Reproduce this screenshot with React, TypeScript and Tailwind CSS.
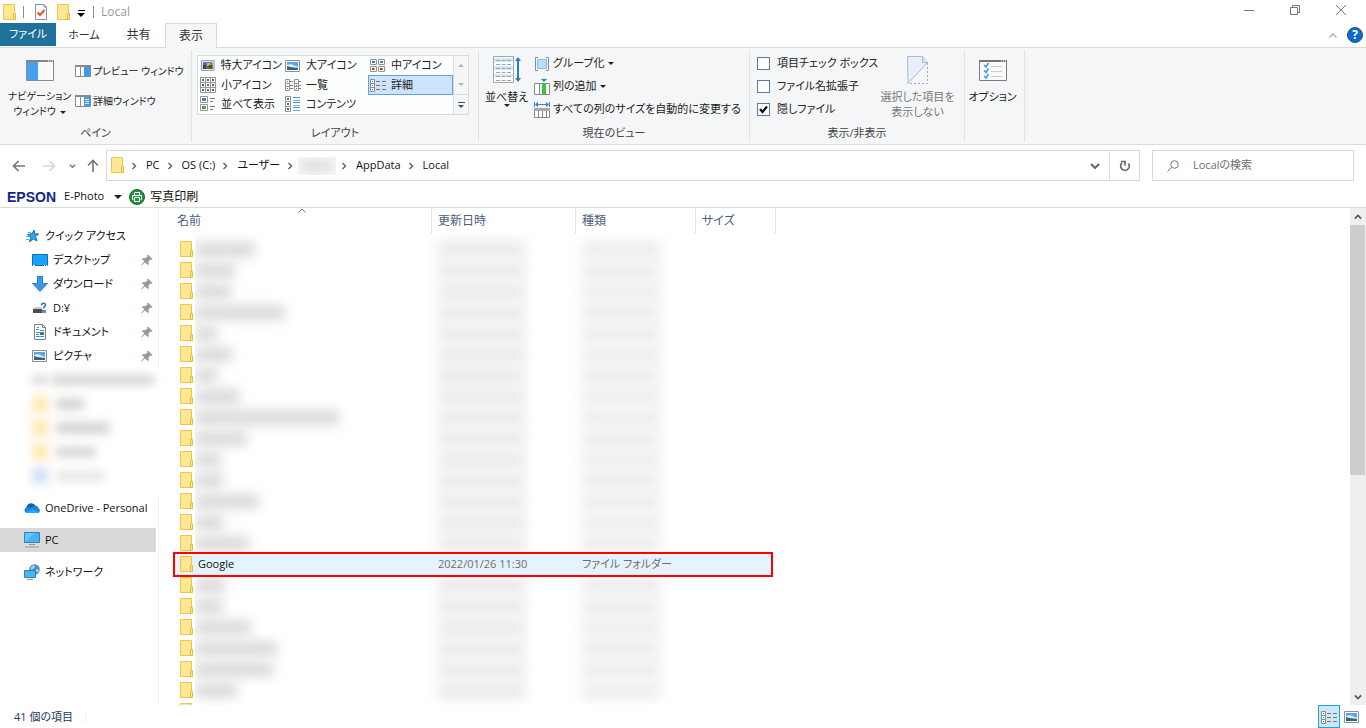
import React from "react";
import clsx from "clsx";

interface IconProps {
  className?: string;
}

interface FileRow {
  name?: string;
  date?: string;
  type?: string;
  hidden?: number;
}

// Rows without a name are redacted, "hidden" is the width of the smudge
const rows: FileRow[] = [
  ...[60, 40, 36, 90, 22, 37, 22, 44, 144, 52, 26, 28, 64, 28, 54].map((hidden) => ({ hidden })),
  { name: "Google", date: "2022/01/26 11:30", type: "ファイル フォルダー" },
  ...[30, 28, 56, 82, 78, 42].map((hidden) => ({ hidden })),
  {},
];

const FolderIcon = () => (
  <svg viewBox="0 0 13 16" className="h-4 w-[13px] shrink-0">
    <path d="M.5.5h11v15H.5z" fill="#ffe794" stroke="#ecc64b" />
    <path d="M10.500 9.500h2v6h-2z" fill="#ffe794" stroke="#e3bb43" />
  </svg>
);

const CheckedDocIcon = () => (
  <svg viewBox="0 0 12 16" className="h-4 w-3">
    <path d="M.5.5H9L11.500 3v12.500H.5z" fill="#fafafa" stroke="#8a8f99" />
    <path d="M9 .5V3h2.500" fill="none" stroke="#8a8f99" />
    <path d="M2.500 8.500 5 11l4.500-5" fill="none" stroke="#e2562a" strokeWidth="2" />
  </svg>
);

const DownTriangle = ({ className }: IconProps) => (
  <svg viewBox="0 0 6 3" className={clsx("inline-block h-[3px] w-[6px] shrink-0", className)}>
    <path d="M0 0h6L3 3z" fill="currentColor" />
  </svg>
);

const Chevron = ({ className }: IconProps) => (
  <svg viewBox="0 0 8 8" className={clsx("size-2 shrink-0 text-[#666]", className)}>
    <path d="M2.500 1 5.500 4l-3 3" fill="none" stroke="currentColor" strokeWidth="1.500" />
  </svg>
);

const ChevronDown = ({ className }: IconProps) => (
  <svg viewBox="0 0 10 6" className={clsx("shrink-0", className)}>
    <path d="M1 1l4 4 4-4" fill="none" stroke="currentColor" strokeWidth="2" />
  </svg>
);

const NavPaneIcon = () => (
  <svg viewBox="0 0 28 21" className="h-[21px] w-7">
    <path d="M.5.5h27v20H.5z" fill="#f8f9fa" stroke="#8a8a8a" />
    <path d="M0 0h28v2H0z" fill="#858585" />
    <path d="M1 2h11v18H1z" fill="#45a2e8" />
    <path d="M22 1h1M24 1h1M26 1h1" stroke="#fff" />
  </svg>
);

const PreviewPaneIcon = () => (
  <svg viewBox="0 0 16 12" className="h-3 w-4 shrink-0">
    <path d="M.5.5h15v11H.5z" fill="#fff" stroke="#8a8a8a" />
    <path d="M0 0h16v2H0zM5 2h1v9H5z" fill="#8a8a8a" />
    <path d="M9 2h6v9H9z" fill="#3f9be3" />
  </svg>
);

const DetailsPaneIcon = () => (
  <svg viewBox="0 0 16 12" className="h-3 w-4 shrink-0">
    <path d="M.5.5h15v11H.5z" fill="#fff" stroke="#8a8a8a" />
    <path d="M0 0h16v2H0zM5 2h1v9H5z" fill="#8a8a8a" />
    <path d="M9 2h6v9H9z" fill="#3f9be3" />
    <path d="M10 4.500h4M10 6.500h4M10 8.500h4" stroke="#d6ebfb" />
  </svg>
);

const ExtraLargeIcon = () => (
  <svg viewBox="0 0 16 16" className="size-4">
    <path d="M1.500 2.500h13v10h-13z" fill="#fff" stroke="#8a8a8a" />
    <path d="M3 4h10v7H3z" fill="#3471d1" />
    <path d="M3 7h4v4H3z" fill="#29417a" />
    <path d="M7 5h4v3H7z" fill="#e8b424" />
    <path d="M9 7h4v4H9z" fill="#3b5a27" />
    <path d="M6 8h3v2H6z" fill="#d63c28" />
  </svg>
);

const PictureIcon = () => (
  <svg viewBox="0 0 16 16" className="size-4 shrink-0">
    <path d="M.5 2.500h14v11H.5z" fill="#fff" stroke="#8a8f94" />
    <path d="M2 4h11v5H2z" fill="#5ba7ee" />
    <path d="M2 7l4-1 7 3v1H2z" fill="#dceefa" />
    <path d="M2 8l3 1 8 1v2H2z" fill="#34617c" />
  </svg>
);

const MediumIcon = () => (
  <svg viewBox="0 0 16 16" className="size-4">
    <path d="M.5 1.500h6v5h-6zM8.500 1.500h6v5h-6zM.5 8.500h6v5h-6zM8.500 8.500h6v5h-6z" fill="#fff" stroke="#949494" />
    <path d="M2 3h3v2H2zM10 3h3v2h-3z" fill="#3f83b8" />
    <path d="M2 10h3v2H2z" fill="#c93625" />
    <path d="M10 10h3v2h-3z" fill="#2c58a0" />
    <path d="M4 10h1v2H4zM12 10h1v2h-1z" fill="#e3a51b" />
  </svg>
);

const SmallIcon = () => (
  <svg viewBox="0 0 16 16" className="size-4">
    <path d="M.5.5h15v15H.5zM5.500 0v16M10.500 0v16M0 5.500h16M0 10.500h16" fill="#fff" stroke="#949494" />
    <path d="M2 2h2v2H2zM7 7h2v2H7zM7 12h2v2H7z" fill="#3b79a8" />
    <path d="M7 2h2v2H7zM12 7h2v2h-2zM2 12h2v2H2z" fill="#34794a" />
    <path d="M12 2h2v2h-2zM2 7h2v2H2zM12 12h2v2h-2z" fill="#a93a33" />
  </svg>
);

const ListIcon = () => (
  <svg viewBox="0 0 16 16" className="size-4">
    <path d="M.5 2.500h4v11h-4zM9.500 2.500h4v11h-4zM0 6.500h5M0 9.500h5M9 6.500h5M9 9.500h5" fill="#fff" stroke="#949494" />
    <path d="M5 4.500h3M5 8.500h3M5 11.500h3M14 4.500h2M14 8.500h2M14 11.500h2" stroke="#7d7d7d" />
    <path d="M2 4h1v1H2zM11 8h1v1h-1z" fill="#2f80c9" />
    <path d="M2 11h1v1H2zM11 11h1v1h-1z" fill="#c0392b" />
  </svg>
);

const DetailsIcon = () => (
  <svg viewBox="0 0 16 16" className="size-4">
    <path d="M.5 2.500h4v12h-4zM0 6.500h5M0 10.500h5" fill="#fff" stroke="#8c8c8c" />
    <path d="M6 4.500h4M12 4.500h4M6 8.500h4M12 8.500h4M6 12.500h4M12 12.500h4" stroke="#777" />
    <path d="M2 4h1v1H2z" fill="#2f8f7c" />
    <path d="M2 8h1v1H2z" fill="#2f80e9" />
    <path d="M2 12h1v1H2z" fill="#c8281b" />
  </svg>
);

const TilesIcon = () => (
  <svg viewBox="0 0 16 16" className="size-4">
    <path d="M.5.500h7v6h-7zM.5 8.500h7v6h-7z" fill="#fff" stroke="#949494" />
    <path d="M2 2h4v3H2z" fill="#3c82bd" />
    <path d="M2 10h4v3H2z" fill="#4d8a4c" />
    <path d="M4 11h2v1H4z" fill="#e0a526" />
    <path d="M10 2.500h5M10 5.500h3M10 10.500h5M10 13.500h3" stroke="#777" />
  </svg>
);

const ContentIcon = () => (
  <svg viewBox="0 0 16 16" className="size-4">
    <path d="M.5.500h5v15h-5zM0 5.500h6M0 10.500h6" fill="#fff" stroke="#949494" />
    <path d="M2 2h2v2H2z" fill="#2f80c9" />
    <path d="M2 7h2v2H2z" fill="#58744b" />
    <path d="M2 12h2v2H2z" fill="#c0392b" />
    <path d="M8 1.500h7M8 6.500h7M8 11.500h7" stroke="#4a90e2" />
    <path d="M8 4.500h7M8 9.500h7M8 14.500h7" stroke="#6fa8e8" />
  </svg>
);

const SortIcon = () => (
  <svg viewBox="0 0 28 28" className="size-7">
    <path d="M.5.5h20v26H.5z" fill="#fff" stroke="#a5a5a5" />
    <path d="M1 2h19v4H1zM1 10h19v4H1zM1 18h19v3H1z" fill="#d0e9f8" />
    <path
      d="M3 4.500h15M3 8.500h15M3 12.500h15M3 16.500h15M3 20.500h15M3 24.500h15"
      stroke="#a0a4a8"
      strokeDasharray="4 1.500"
    />
    <path d="M25 3v21" stroke="#2b7dc4" strokeWidth="2" />
    <path d="M22 5l3-4 3 4zM22 22l3 4 3-4z" fill="#2b7dc4" />
  </svg>
);

const GroupByIcon = () => (
  <svg viewBox="0 0 16 16" className="size-4 shrink-0">
    <path d="M4 1.500H1.500v13H4M12 1.500h2.500v13H12" fill="none" stroke="#8d8d8d" />
    <path d="M3.500 3.500h9v9h-9z" fill="#b9e0fa" stroke="#86c0ea" />
  </svg>
);

const AddColumnIcon = () => (
  <svg viewBox="0 0 16 16" className="size-4 shrink-0">
    <path d="M.5 4.500h15v11H.5zM5.500 4v12M11.500 4v12" fill="#fff" stroke="#888" />
    <path d="M8 5h4v10H8z" fill="#32cb38" />
    <path d="M7 0h6l-3 3z" fill="#2b7dc4" />
  </svg>
);

const FitColumnsIcon = () => (
  <svg viewBox="0 0 16 16" className="size-4 shrink-0">
    <path d="M.5 0v5M15.500 0v5M2 2.500h12" stroke="#3588cd" />
    <path d="M4 0v5L1 2.500zM12 0v5l3-2.500z" fill="#2b7dc4" />
    <path d="M.5 6.500h15v9H.5zM4.500 9v6M8.500 9v6M12.500 9v6" fill="#fff" stroke="#888" />
    <path d="M0 6h16v3H0z" fill="#a8a8a8" />
  </svg>
);

const HideItemsIcon = () => (
  <svg viewBox="0 0 22 28" className="h-7 w-[22px]">
    <path d="M.5.5h15l5 6L1 27.500z" fill="#e8effa" stroke="#aab9d0" />
    <path d="M15.500.5v6h5" fill="#d7e5f8" stroke="#aab9d0" />
    <path d="M20.500 7v20.500H1" fill="none" stroke="#95a8c8" strokeDasharray="2 2" />
  </svg>
);

const OptionsIcon = () => (
  <svg viewBox="0 0 28 21" className="h-[21px] w-7">
    <path d="M.5.5h27v20H.5z" fill="#fafafa" stroke="#7b7b7b" />
    <path d="M0 0h28v2H0z" fill="#747474" />
    <path d="M22 1h1M24 1h1M26 1h1" stroke="#fff" />
    <path
      d="M5 5l2 2 2.500-4M5 10.500l2 2 2.500-4M5 16l2 2 2.500-4"
      fill="none"
      stroke="#3d9be6"
      strokeWidth="1.500"
    />
    <path d="M12 6.500h11M12 11.500h11M12 16.500h11" stroke="#c9c9c9" />
  </svg>
);

const BackArrow = ({ className }: IconProps) => (
  <svg viewBox="0 0 14 12" className={clsx("h-3 w-[14px] shrink-0", className)}>
    <path d="M6.500 1l-5 5 5 5M1.500 6H13" fill="none" stroke="currentColor" strokeWidth="1.700" />
  </svg>
);

const PrinterIcon = () => (
  <svg viewBox="0 0 16 16" className="size-4 shrink-0">
    <circle cx="8" cy="8" r="7.500" fill="#24933d" stroke="#2c5c35" />
    <path d="M5.500 6V3.500h5V6M4.500 10.500h-1v-4h9v4h-1M5.500 8.500h5v4h-5z" fill="none" stroke="#fff" />
  </svg>
);

const StarIcon = () => (
  <svg viewBox="0 0 16 16" className="size-4">
    <path
      d="M10 2l.8 3.800 4 .2-3.300 2.500 1.500 4.500-3.700-2-4 3 1.500-4.500L3.500 6.500l4.500-.8z"
      fill="#2ea3ef"
      stroke="#1777bd"
    />
    <path d="M4 4.500h3M2 8.500h3M2 11.500h3" stroke="#58b5f3" />
  </svg>
);

const DesktopIcon = () => (
  <svg viewBox="0 0 16 16" className="size-4">
    <path d="M.5 2.500h15v11H.5z" fill="#1aa3fc" stroke="#0c72b8" />
    <path d="M1 13.500h2M12 13.500h1M14 13.500h1" stroke="#fff" />
  </svg>
);

const DownloadIcon = () => (
  <svg viewBox="0 0 16 16" className="size-4">
    <path d="M5.500.500h5v7h5L8 15.500.500 7.500h5z" fill="#3c98e4" stroke="#2b80c9" />
  </svg>
);

const DriveIcon = () => (
  <svg viewBox="0 0 16 16" className="size-4">
    <path d="M1 9l2-2h6l1 2z" fill="#c6c9cb" />
    <path d="M1 9h9v4H1z" fill="#4a4e51" />
    <path d="M10 10h4v3h-4z" fill="#8b9094" />
    <path d="M9.500 5.500c0-3 4-3 4-.5 0 1.500-2 1.500-2 3.500" fill="none" stroke="#2381c8" strokeWidth="1.600" />
    <path d="M10.500 10h2v1.500h-2z" fill="#2381c8" />
  </svg>
);

const DocumentIcon = () => (
  <svg viewBox="0 0 16 16" className="size-4">
    <path d="M2.500.500h8l3 3v12h-11z" fill="#fff" stroke="#848484" />
    <path d="M10.500.500v3h3" fill="none" stroke="#848484" />
    <path d="M5 3.500h2M4 5.500h3M8 6.500h4M4 8.500h8M4 10.500h3M4 12.500h8" stroke="#3f8fcd" />
    <path d="M8 9h4v2H8z" fill="#326b99" />
  </svg>
);

const PinIcon = () => (
  <svg viewBox="0 0 12 12" className="size-3">
    <path
      d="M7 .5 11.500 5l-1 .8-1-.2-2 2 .2 2.400-1 1L4 8.300.8 11.500.3 11l3-3.500L1 5l1-1 2.500.3 2-2-.3-1z"
      fill="#8e9aa5"
    />
  </svg>
);

const OneDriveIcon = () => (
  <svg viewBox="0 0 16 16" className="size-4">
    <path d="M2.500 7C3.500 3 9 1.500 12 6.500L8 11 1 10z" fill="#0a62b5" />
    <path d="M7 8c2-3 7-3 7.300 0C16.500 9 16.500 13 13.500 13H3.500C-.5 13-.5 7.500 3.500 7.200c1.500-.2 2.500.2 3.500.8z" fill="#1b84d8" />
    <path d="M1.500 12.300l7-3 6.500 2.700-1.500 1h-10z" fill="#2ba6ef" />
  </svg>
);

const PcIcon = () => (
  <svg viewBox="0 0 16 16" className="size-4">
    <path d="M.5.5h15v10H.5z" fill="#42b4fb" stroke="#3a80ad" />
    <path d="M1 10L11 1H1z" fill="#69c5fc" />
    <path d="M5 12.500h6M1 15h14" stroke="#8c9aa5" />
  </svg>
);

const NetworkIcon = () => (
  <svg viewBox="0 0 16 16" className="size-4">
    <circle cx="10.500" cy="5.500" r="5.300" fill="#4d91be" />
    <path d="M7 3l3-2 1 2-2 2-2 1zM12 5l3 .500-1 3-2-1z" fill="#a5d3ea" />
    <path d="M.5 6.500h11v7H.5z" fill="#45b6fb" stroke="#357fae" />
    <path d="M3 15.500h6" stroke="#8c9aa5" />
  </svg>
);

const RibbonGroup = ({
  label,
  className,
  children,
}: {
  label: string;
  className: string;
  children: React.ReactNode;
}) => (
  <section className={clsx("flex h-[92px] shrink-0 flex-col border-r border-[#e2e3e4]", className)}>
    <div className="flex h-[73px]">{children}</div>
    <h2 className="text-center text-[11px] leading-[19px] text-[#444]">{label}</h2>
  </section>
);

const layouts = [
  { label: "特大アイコン", icon: <ExtraLargeIcon /> },
  { label: "大アイコン", icon: <PictureIcon /> },
  { label: "中アイコン", icon: <MediumIcon /> },
  { label: "小アイコン", icon: <SmallIcon /> },
  { label: "一覧", icon: <ListIcon /> },
  { label: "詳細", icon: <DetailsIcon /> },
  { label: "並べて表示", icon: <TilesIcon /> },
  { label: "コンテンツ", icon: <ContentIcon /> },
];

const checks = [
  { id: "item-check", label: "項目チェック ボックス", on: false },
  { id: "extensions", label: "ファイル名拡張子", on: false },
  { id: "hidden-files", label: "隠しファイル", on: true },
];

const Ribbon = () => (
  <div className="flex h-[97px] shrink-0 border-b border-[#dadbdc] bg-[#f5f6f7] pt-0.5 text-[#222]">
    <RibbonGroup label="ペイン" className="w-48 text-[10px]">
      <button className="ml-1 flex w-[71px] flex-col items-center gap-2 pt-[10px] leading-[15px]">
        <NavPaneIcon />
        <span className="whitespace-nowrap">
          ナビゲーション
          <br />
          ウィンドウ
          <DownTriangle className="ml-1 align-middle" />
        </span>
      </button>
      <div className="flex flex-col pt-[6px] whitespace-nowrap">
        <button className="flex h-[30px] items-center gap-0.5">
          <PreviewPaneIcon />
          プレビュー ウィンドウ
        </button>
        <button className="flex h-[30px] items-center gap-0.5">
          <DetailsPaneIcon />
          詳細ウィンドウ
        </button>
      </div>
    </RibbonGroup>

    <RibbonGroup label="レイアウト" className="w-[287px]">
      <div className="mt-[5px] ml-[5px] flex h-[60px] border border-[#d9dadb] bg-[#fcfdfd]">
        <div className="grid w-[255px] grid-cols-3 grid-rows-3">
          {layouts.map(({ label, icon }) => (
            <button
              key={label}
              className={clsx(
                "flex items-center gap-[5px] border pl-px whitespace-nowrap",
                label === "詳細" ? "border-[#62a2e4] bg-[#cde4fc]" : "border-transparent"
              )}
            >
              {icon}
              {label}
            </button>
          ))}
        </div>
        <div className="flex w-[15px] flex-col border-l border-[#d9dadb] bg-[#f5f6f7]">
          <button aria-label="上へ" className="flex flex-1 items-center justify-center text-[#b5b5b5]">
            <DownTriangle className="rotate-180" />
          </button>
          <button aria-label="下へ" className="flex flex-1 items-center justify-center text-[#b5b5b5]">
            <DownTriangle />
          </button>
          <button
            aria-label="その他"
            className="flex flex-1 flex-col items-center justify-center gap-0.5 border-t border-[#d9dadb] text-[#3f4f66]"
          >
            <span className="h-px w-[7px] bg-[#3f4f66]" />
            <DownTriangle />
          </button>
        </div>
      </div>
    </RibbonGroup>

    <RibbonGroup label="現在のビュー" className="w-[271px]">
      <button className="flex w-[55px] flex-col items-center pt-[6px] leading-[15px]">
        <SortIcon />
        <span className="mt-[5px] whitespace-nowrap">並べ替え</span>
        <DownTriangle />
      </button>
      <div className="flex flex-col pt-0.5 whitespace-nowrap">
        <button className="flex h-[23px] items-center gap-[3px]">
          <GroupByIcon />
          グループ化
          <DownTriangle />
        </button>
        <button className="flex h-[23px] items-center gap-[3px]">
          <AddColumnIcon />
          列の追加
          <DownTriangle />
        </button>
        <button className="flex h-[23px] items-center gap-[3px]">
          <FitColumnsIcon />
          すべての列のサイズを自動的に変更する
        </button>
      </div>
    </RibbonGroup>

    <RibbonGroup label="表示/非表示" className="w-[215px]">
      <div className="flex w-[125px] flex-col pt-0.5 pl-[7px] whitespace-nowrap">
        {checks.map(({ id, label, on }) => (
          <div key={id} className="flex h-[23px] items-center gap-[7px]">
            <span className="relative flex">
              <input
                id={id}
                type="checkbox"
                defaultChecked={on}
                className="peer size-[13px] appearance-none border border-[#5b7ba6] bg-white"
              />
              <svg
                viewBox="0 0 13 13"
                className="pointer-events-none absolute inset-0 size-[13px] opacity-0 peer-checked:opacity-100"
              >
                <path d="M3 6l2.500 3L10 3.500" fill="none" stroke="#111" strokeWidth="2.200" />
              </svg>
            </span>
            <label htmlFor={id}>{label}</label>
          </div>
        ))}
      </div>
      <button
        disabled
        className="flex flex-1 flex-col items-center gap-[5px] pt-[6px] pr-1 leading-[15px] whitespace-nowrap text-[#777]"
      >
        <HideItemsIcon />
        <span>
          選択した項目を
          <br />
          表示しない
        </span>
      </button>
    </RibbonGroup>

    <section className="flex h-[92px] w-[60px] shrink-0 justify-center border-r border-[#e2e3e4] pr-1">
      <button className="flex flex-col items-center gap-2 pt-[10px] leading-[15px] whitespace-nowrap">
        <OptionsIcon />
        オプション
      </button>
    </section>
  </div>
);

const TitleBar = () => (
  <header className="flex h-[23px] shrink-0 items-center pl-[3px]">
    <FolderIcon />
    <span className="ml-[7px] h-3 w-px bg-[#8d8d8d]" />
    <button aria-label="プロパティ" className="ml-[11px]">
      <CheckedDocIcon />
    </button>
    <button aria-label="新しいフォルダー" className="ml-[10px]">
      <FolderIcon />
    </button>
    <button aria-label="カスタマイズ" className="mt-1 ml-[7px] flex flex-col items-center gap-0.5 text-black">
      <span className="h-px w-[7px] bg-black" />
      <svg viewBox="0 0 8 4" className="h-1 w-2">
        <path d="M0 0h8L4 4z" fill="currentColor" />
      </svg>
    </button>
    <span className="ml-2 h-3 w-px bg-[#8d8d8d]" />
    <h1 className="ml-[7px] text-xs text-[#999]">Local</h1>
    <div className="mr-5 ml-auto flex h-5 items-center gap-9 self-start text-[#777]">
      <button aria-label="最小化">
        <svg viewBox="0 0 10 10" className="size-[10px]">
          <path d="M0 5.500h10" stroke="currentColor" />
        </svg>
      </button>
      <button aria-label="元に戻す">
        <svg viewBox="0 0 10 10" className="size-[10px]">
          <path d="M.5 2.500h7v7h-7zM2.500 2.500v-2h7v7h-2" fill="none" stroke="currentColor" />
        </svg>
      </button>
      <button aria-label="閉じる">
        <svg viewBox="0 0 10 10" className="size-[10px]">
          <path d="M0 0l10 10M10 0L0 10" stroke="currentColor" />
        </svg>
      </button>
    </div>
  </header>
);

const Tabs = () => (
  <nav className="flex h-[25px] shrink-0 border-b border-[#dadbdc] text-xs text-[#333]">
    <button className="mb-px w-14 bg-[#1f7199] text-[11px] text-white">ファイル</button>
    <button className="w-14 text-[11px]">ホーム</button>
    <button className="w-[53px]">共有</button>
    <button className="-mb-px w-[52px] border border-b-0 border-[#dadbdc] bg-[#f5f6f7]">表示</button>
    <div className="mr-[3px] ml-auto flex items-center gap-[10px]">
      <button aria-label="リボンの最小化" className="text-[#aaa]">
        <svg viewBox="0 0 8 5" className="h-[5px] w-2">
          <path d="M.5 4.500L4 1l3.500 3.500" fill="none" stroke="currentColor" strokeWidth="1.300" />
        </svg>
      </button>
      <button
        aria-label="ヘルプ"
        className="size-4 rounded-full border border-[#24527f] bg-[#0a6cce] text-center text-xs leading-[14px] font-bold text-white"
      >
        ?
      </button>
    </div>
  </nav>
);

const Crumb = ({ children }: { children: React.ReactNode }) => (
  <>
    <Chevron className="mr-[6px] ml-1" />
    <a href="#" className="px-0.5 whitespace-nowrap">
      {children}
    </a>
  </>
);

const AddressBar = () => (
  <div className="flex shrink-0 items-stretch px-3 py-[5px]">
    <div className="flex w-[94px] items-center text-[#777]">
      <button aria-label="戻る">
        <BackArrow />
      </button>
      <button aria-label="進む" className="ml-4 text-[#d5d5d5]">
        <BackArrow className="rotate-180" />
      </button>
      <button aria-label="履歴" className="ml-[13px]">
        <ChevronDown className="h-1 w-[7px]" />
      </button>
      <button aria-label="上へ" className="ml-[10px]">
        <BackArrow className="rotate-90" />
      </button>
    </div>
    <div className="flex h-[31px] flex-1 items-center border border-[#d9d9d9] pl-1">
      <span className="mr-0.5 pb-0.5">
        <FolderIcon />
      </span>
      <Crumb>PC</Crumb>
      <Crumb>OS (C:)</Crumb>
      <Crumb>ユーザー</Crumb>
      <Chevron className="mx-1" />
      <span className="h-[18px] w-[38px] overflow-hidden bg-[#f6f6f6]">
        <span className="m-1 block h-[10px] bg-[#dedede] blur-xs" />
      </span>
      <Crumb>AppData</Crumb>
      <Crumb>Local</Crumb>
      <button aria-label="以前の場所" className="mr-[9px] ml-auto text-[#666]">
        <ChevronDown className="h-[6px] w-[10px]" />
      </button>
      <button
        aria-label="最新の情報に更新"
        className="flex h-full w-[30px] items-center justify-center border-l border-[#d9d9d9] text-[#666]"
      >
        <svg viewBox="0 0 12 12" className="size-3">
          <path
            d="M9.500 3.500A4.300 4.300 0 113 2.800M2 1.500h4v4"
            fill="none"
            stroke="currentColor"
            strokeWidth="1.700"
          />
        </svg>
      </button>
    </div>
    <label className="ml-3 flex h-[31px] w-[202px] items-center gap-[14px] border border-[#d9d9d9] pl-[14px]">
      <svg viewBox="0 0 12 12" className="size-3 shrink-0">
        <circle cx="7.500" cy="4.500" r="3.800" fill="none" stroke="#777" />
        <path d="M4.700 7.300L.5 11.500" stroke="#777" />
      </svg>
      <input
        type="text"
        aria-label="検索"
        placeholder="Localの検索"
        className="w-full min-w-0 bg-transparent outline-none placeholder:text-[#6d6d6d]"
      />
    </label>
  </div>
);

const SideItem = ({
  icon,
  label,
  nested,
  selected,
}: {
  icon: React.ReactNode;
  label: string;
  nested?: boolean;
  selected?: boolean;
}) => (
  <li>
    <a
      href="#"
      className={clsx(
        "mr-0.5 flex h-6 items-center gap-[5px] pr-[3px] whitespace-nowrap",
        nested ? "pl-8" : "pl-6",
        selected && "bg-[#d9d9d9]"
      )}
    >
      {icon}
      {label}
      {nested && (
        <span className="ml-auto">
          <PinIcon />
        </span>
      )}
    </a>
  </li>
);

const Sidebar = () => (
  <aside className="w-[159px] shrink-0 border-r border-[#f1f1f1] pt-4">
    <ul>
      <SideItem icon={<StarIcon />} label="クイック アクセス" />
      <SideItem nested icon={<DesktopIcon />} label="デスクトップ" />
      <SideItem nested icon={<DownloadIcon />} label="ダウンロード" />
      <SideItem nested icon={<DriveIcon />} label="D:¥" />
      <SideItem nested icon={<DocumentIcon />} label="ドキュメント" />
      <SideItem nested icon={<PictureIcon />} label="ピクチャ" />
    </ul>
    {/* Redacted shortcuts */}
    <div className="-mr-px bg-white pb-2 pl-8">
      <div className="flex h-6 items-center gap-1">
        <span className="h-2 w-4 bg-neutral-300 blur-[5px]" />
        <span className="h-[10px] w-[102px] bg-neutral-300 blur-[5px]" />
      </div>
      <div className="flex h-6 items-center gap-2">
        <span className="size-4 bg-[#ffe9ab] blur-[5px]" />
        <span className="h-3 w-7 bg-neutral-300 blur-[5px]" />
      </div>
      <div className="flex h-6 items-center gap-2">
        <span className="size-4 bg-[#ffe9ab] blur-[5px]" />
        <span className="h-3 w-[54px] bg-neutral-300 blur-[5px]" />
      </div>
      <div className="flex h-6 items-center gap-2">
        <span className="size-4 bg-[#ffe9ab] blur-[5px]" />
        <span className="h-[10px] w-10 bg-neutral-300 blur-[5px]" />
      </div>
      <div className="flex h-6 items-center gap-2">
        <span className="size-4 bg-[#cfe1f8] blur-[5px]" />
        <span className="h-[10px] w-12 bg-neutral-200 blur-[5px]" />
      </div>
    </div>
    <ul className="space-y-2">
      <SideItem icon={<OneDriveIcon />} label="OneDrive - Personal" />
      <SideItem selected icon={<PcIcon />} label="PC" />
      <SideItem icon={<NetworkIcon />} label="ネットワーク" />
    </ul>
  </aside>
);

const columns = [
  { label: "名前", className: "w-[261px]" },
  { label: "更新日時", className: "w-36" },
  { label: "種類", className: "w-[120px]" },
  { label: "サイズ", className: "w-20" },
];

const FileTable = () => (
  <div className="min-w-0 flex-1 overflow-hidden pl-3">
    <table className="w-[605px] table-fixed border-collapse">
      <thead>
        <tr>
          {columns.map(({ label, className }, i) => (
            <th key={label} className={clsx("relative h-[31px] p-0 align-top font-normal", className)}>
              <div className="flex h-[26px] items-center border-r border-[#e5e5e5] pl-[6px] text-xs text-[#4c607a]">
                {label}
              </div>
              {i === 0 && (
                <svg viewBox="0 0 8 5" className="absolute top-0 left-1/2 h-[5px] w-2 -translate-x-1">
                  <path d="M.5 4.500L4 1l3.500 3.500" fill="none" stroke="#777" />
                </svg>
              )}
            </th>
          ))}
        </tr>
      </thead>
      <tbody>
        {rows.map(({ name, date, type, hidden }, i) => (
          <tr key={i} className={clsx("relative h-[21px]", name ? "z-10" : "z-0")}>
            <td className="p-0">
              {name && (
                <span className="absolute -inset-y-0.5 right-[3px] left-0.5 -z-10 border-2 border-[#ff0000] bg-[#e5f3ff]" />
              )}
              <div className="flex h-[21px] items-center pb-px pl-[9px]">
                <FolderIcon />
                {name && <span className="pl-[5px]">{name}</span>}
                {hidden && (
                  <span className="ml-0.5 flex-1 overflow-x-clip">
                    <span className="block h-[15px] bg-[#dadada] blur-[6px]" style={{ width: hidden }} />
                  </span>
                )}
              </div>
            </td>
            <td className="p-0 pl-[6px] text-[#6d6d6d]">
              {date}
              {hidden && <span className="block h-[19px] w-[88px] bg-[#ececec] blur-[6px]" />}
            </td>
            <td className="p-0 pl-[6px] text-[#6d6d6d]">
              {type}
              {hidden && <span className="block h-[19px] w-[78px] bg-[#eeeeee] blur-[6px]" />}
            </td>
            <td className="p-0" />
          </tr>
        ))}
      </tbody>
    </table>
  </div>
);

const ScrollBar = () => (
  <div className="flex w-4 shrink-0 flex-col bg-[#eef0f0] text-[#555]">
    <button aria-label="上にスクロール" className="flex h-[17px] items-center justify-center">
      <ChevronDown className="h-[6px] w-2 rotate-180" />
    </button>
    <div className="flex-1">
      <div className="mr-px h-[54%] bg-[#cdcdcd]" />
    </div>
    <button aria-label="下にスクロール" className="flex h-[17px] items-center justify-center">
      <ChevronDown className="h-[6px] w-2" />
    </button>
  </div>
);

const App = () => {
  return (
    <div className="flex h-screen flex-col overflow-hidden bg-white font-['Open_Sans','Noto_Sans_CJK_JP',sans-serif] text-[11px] text-[#111] [font-feature-settings:'palt']">
      <TitleBar />
      <Tabs />
      <Ribbon />
      <AddressBar />

      {/* Epson toolbar */}
      <div className="flex h-[22px] shrink-0 items-center border-b border-[#dadada] pl-[7px]">
        <span className="font-['Liberation_Sans',sans-serif] text-sm font-bold text-[#14248c]">EPSON</span>
        <button className="ml-2 flex items-center gap-[10px]">
          E-Photo
          <svg viewBox="0 0 8 4" className="h-1 w-2">
            <path d="M0 0h8L4 4z" fill="#222" />
          </svg>
        </button>
        <button className="ml-[7px] flex items-center gap-[5px] text-xs">
          <PrinterIcon />
          写真印刷
        </button>
      </div>

      <main className="flex min-h-0 flex-1">
        <Sidebar />
        <FileTable />
        <ScrollBar />
      </main>

      <footer className="flex h-[23px] shrink-0 items-center pr-[6px] pl-[14px] text-[#1e395b]">
        <span className="border-r border-[#f0f0f0] pr-3 leading-3">41 個の項目</span>
        <button
          aria-label="詳細表示"
          className="ml-auto flex h-[23px] w-[22px] items-center justify-center border border-[#26a0da] bg-[#cce8f7]"
        >
          <DetailsIcon />
        </button>
        <button aria-label="大アイコン表示" className="ml-1">
          <PictureIcon />
        </button>
      </footer>
    </div>
  );
};

export default App;
